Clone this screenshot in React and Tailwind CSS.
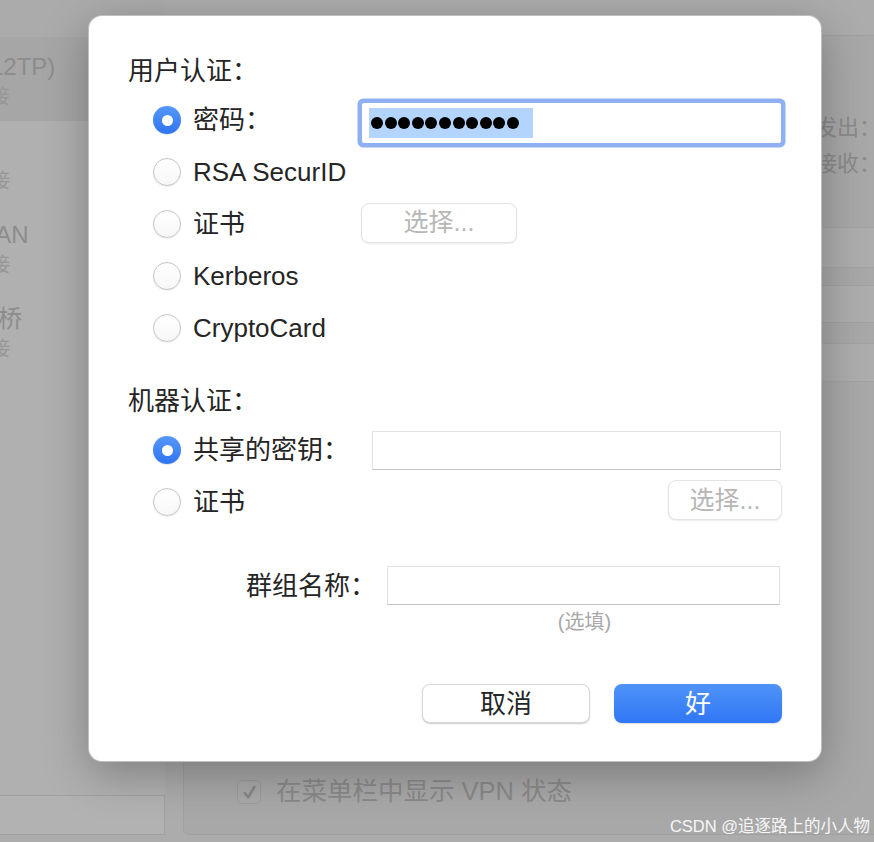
import React from "react";

const sans = "font-['Liberation_Sans','Noto_Sans_CJK_SC',sans-serif]";

const networks = [
  { title: "VPN (L2TP)", sub: "未连接", active: true },
  { title: "Wi-Fi", sub: "未连接" },
  { title: "USB LAN", sub: "未连接" },
  { title: "雷雳网桥", sub: "未连接" },
];

function Radio({ checked }) {
  if (checked) {
    return (
      <span className="flex h-7 w-7 shrink-0 items-center justify-center rounded-full bg-linear-to-b from-[#5597f8] to-[#2f74f2] shadow-[0_0.5px_1px_rgba(0,0,0,0.2)]">
        <span className="h-[11px] w-[11px] rounded-full bg-white" />
      </span>
    );
  }
  return (
    <span className="h-7 w-7 shrink-0 rounded-full border border-[#c6c6c6] bg-linear-to-b from-white to-[#f7f7f7] shadow-[0_0.5px_1px_rgba(0,0,0,0.12)]" />
  );
}

function ChooseButton({ className }) {
  return (
    <button
      type="button"
      className={`h-[40px] rounded-[8px] border border-[#e3e3e3] bg-white text-[25px] leading-none text-[#b6b6b6] shadow-[0_1px_1.5px_rgba(0,0,0,0.08)] ${className}`}
    >
      选择...
    </button>
  );
}

function Field({ className }) {
  return (
    <div
      className={`h-[39px] border border-[#e2e2e2] border-b-[#c3c3c3] bg-white ${className}`}
    />
  );
}

function Background() {
  return (
    <div className="flex h-full pb-[7px]">
      {/* sidebar with the network list, scrolled partly out of view */}
      <div className="flex w-[165px] shrink-0 flex-col">
        <div className="h-[37px] bg-[#ababab]" />
        <div className="flex flex-1 flex-col bg-[#b0b0b0]">
          {networks.map((n) => (
            <div
              key={n.title}
              className={`flex h-[84px] flex-col pt-[15px] ${n.active ? "bg-[#a6a6a6]" : ""}`}
            >
              <div className="-ml-[74px] whitespace-nowrap text-[24px] leading-[30px] text-[#8c8c8c]">
                {n.title}
              </div>
              <div className="-ml-[50px] mt-[2px] whitespace-nowrap text-[20px] leading-[26px] text-[#969696]">
                {n.sub}
              </div>
            </div>
          ))}
        </div>
        <div className="h-[40px] border-y border-r border-[#a0a0a0] bg-[#b2b2b2]" />
      </div>

      {/* detail panel */}
      <div className="-mr-[30px] ml-[18px] mt-[35px] flex flex-1 flex-col rounded-b-[6px] border border-[#a0a0a0] bg-[#a8a8a8]">
        <div className="mr-[22px] mt-[74px] flex flex-col items-end text-[22px] leading-[36px] text-[#8a8a8a]">
          <span>发出：</span>
          <span>接收：</span>
        </div>
        <div className="mt-[45px] flex flex-col">
          <div className="h-[41px] border-y border-[#a2a2a2] bg-[#adadad]" />
          <div className="mt-[17px] h-[38px] border-y border-[#a2a2a2] bg-[#adadad]" />
          <div className="mt-[20px] h-[39px] border-y border-[#a2a2a2] bg-[#adadad]" />
        </div>
        <div className="flex-1" />
        <div className="flex h-[30px] items-center gap-[15px] pl-[53px]">
          <span className="flex h-[24px] w-[24px] items-center justify-center rounded-[5px] border border-[#9c9c9c] bg-[#a9a9a9]">
            <svg viewBox="0 0 16 16" className="h-[17px] w-[17px]">
              <path
                d="M3.5 8.5 L6.8 12.5 L12.5 3"
                fill="none"
                stroke="#878787"
                strokeWidth="2.4"
                strokeLinecap="round"
                strokeLinejoin="round"
              />
            </svg>
          </span>
          <span className="whitespace-nowrap text-[25.5px] leading-none text-[#8a8a8a]">
            在菜单栏中显示 VPN 状态
          </span>
        </div>
        <div className="h-[27px]" />
      </div>
    </div>
  );
}

function Dialog() {
  return (
    <div className="absolute left-[88px] top-[15px] flex h-[747px] w-[734px] flex-col rounded-[14px] border border-black/25 bg-white px-[39px] pb-[38px] pt-[38px] text-[#252525] shadow-[0_12px_45px_rgba(0,0,0,0.28)]">
      <div className="text-[26px] leading-[34px]">用户认证：</div>
      <div className="mt-[6px] flex flex-col pl-[25px]">
        <div className="flex h-[52px] items-center">
          <div className="flex w-[209px] shrink-0 items-center gap-[12px]">
            <Radio checked />
            <span className="text-[26px] leading-[34px]">密码：</span>
          </div>
          <div className="mt-[6px] flex h-[40px] w-[419px] items-center rounded-[2px] bg-white pl-[7px] ring-[4.5px] ring-[#8fb0f2]">
            <div className="flex h-[30px] items-center gap-[1.6px] bg-[#b3d4fd] pl-[2px] pr-[14px]">
              {Array.from({ length: 11 }).map((_, i) => (
                <span key={i} className="h-[12px] w-[12px] rounded-full bg-black" />
              ))}
            </div>
          </div>
        </div>
        <div className="flex h-[52px] items-center gap-[12px]">
          <Radio />
          <span className="text-[26px] leading-[34px]">RSA SecurID</span>
        </div>
        <div className="flex h-[52px] items-center">
          <div className="flex w-[208px] shrink-0 items-center gap-[12px]">
            <Radio />
            <span className="text-[26px] leading-[34px]">证书</span>
          </div>
          <ChooseButton className="-mt-[3px] w-[156px]" />
        </div>
        <div className="flex h-[52px] items-center gap-[12px]">
          <Radio />
          <span className="text-[26px] leading-[34px]">Kerberos</span>
        </div>
        <div className="flex h-[52px] items-center gap-[12px]">
          <Radio />
          <span className="text-[26px] leading-[34px]">CryptoCard</span>
        </div>
      </div>

      <div className="mt-[30px] text-[26px] leading-[34px]">机器认证：</div>
      <div className="mt-[6px] flex flex-col pl-[25px]">
        <div className="flex h-[52px] items-center">
          <div className="flex w-[219px] shrink-0 items-center gap-[12px]">
            <Radio checked />
            <span className="text-[26px] leading-[34px]">共享的密钥：</span>
          </div>
          <Field className="w-[409px]" />
        </div>
        <div className="flex h-[52px] items-center gap-[12px]">
          <Radio />
          <span className="text-[26px] leading-[34px]">证书</span>
          <ChooseButton className="-mt-[4px] ml-auto w-[114px]" />
        </div>
      </div>

      <div className="ml-[118px] mt-[38px] flex items-center gap-[11px]">
        <span className="text-[26px] leading-[34px]">群组名称：</span>
        <Field className="w-[393px]" />
      </div>
      <div className="ml-[260px] mt-[5px] w-[393px] text-center text-[20px] leading-[24px] text-[#a8a8a8]">
        (选填)
      </div>

      <div className="mt-auto flex justify-end gap-[24px]">
        <button
          type="button"
          className="h-[39px] w-[168px] rounded-[8px] border border-[#d8d8d8] bg-white text-[26px] leading-none text-[#262626] shadow-[0_1px_1.5px_rgba(0,0,0,0.2)]"
        >
          取消
        </button>
        <button
          type="button"
          className="h-[39px] w-[168px] rounded-[8px] bg-linear-to-b from-[#4f93f8] to-[#3176f5] text-[26px] leading-none text-white shadow-[0_1px_1.5px_rgba(0,0,0,0.15)]"
        >
          好
        </button>
      </div>
    </div>
  );
}

export default function App() {
  return (
    <div className={`relative h-[842px] w-full overflow-hidden bg-[#acacac] ${sans}`}>
      <Background />
      <Dialog />
      <div className="absolute bottom-[5px] right-[4px] whitespace-nowrap text-[16.5px] leading-[22px] text-white/90">
        CSDN @追逐路上的小人物
      </div>
    </div>
  );
}
